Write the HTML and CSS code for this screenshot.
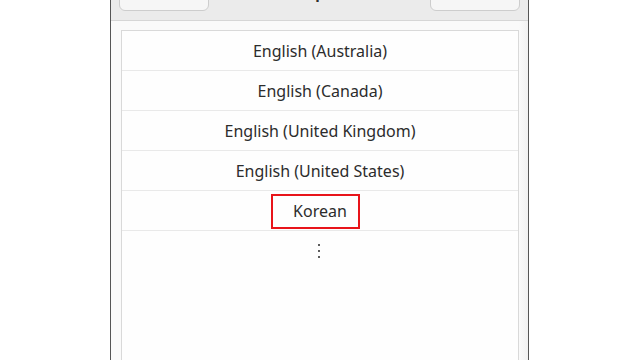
FILE: index.html
```html
<!DOCTYPE html>
<html lang="en">
<head>
    <meta charset="UTF-8">
    <meta name="viewport" content="width=device-width, initial-scale=1.0">
    <title>Add an Input Source</title>
    <link rel="stylesheet" href="styles.css">
</head>
<body>
    <div class="dialog">
        <div class="headerbar">
            <button class="hb-button">Cancel</button>
            <div class="hb-title">Add an Input Source</div>
            <button class="hb-button">Add</button>
        </div>

        <div class="dialog-body">
            <div class="lang-list">
                <div class="lang-row">English (Australia)</div>
                <div class="lang-row">English (Canada)</div>
                <div class="lang-row">English (United Kingdom)</div>
                <div class="lang-row">English (United States)</div>
                <div class="lang-row"><span class="marked">Korean</span></div>
                <div class="lang-row more">
                    <svg width="4" height="14" viewBox="0 0 4 14">
                        <rect x="1" y="0" width="2" height="2" fill="#5c5c5c"/>
                        <rect x="1" y="6" width="2" height="2" fill="#5c5c5c"/>
                        <rect x="1" y="12" width="2" height="2" fill="#5c5c5c"/>
                    </svg>
                </div>
            </div>
        </div>
    </div>
</body>
</html>
```

FILE: styles.css
```css
html, body {
    margin: 0;
    padding: 0;
    height: 100%;
    overflow: hidden;
}

body {
    background-color: #ffffff;
    font-family: "Noto Sans", "Open Sans", sans-serif;
    font-size: 16px;
    color: #2c2c2c;
}

.dialog {
    width: 417px;
    margin: -30px 0 0 110px;
    height: 420px;
    border-left: 1px solid #555555;
    border-right: 1px solid #555555;
    background-color: #fafafa;
    display: flex;
    flex-direction: column;
}

.headerbar {
    height: 51px;
    display: flex;
    align-items: flex-end;
    justify-content: space-between;
    padding: 0 8px 9px 8px;
    box-sizing: border-box;
    background-color: #ebebeb;
    border-bottom: 1px solid #d6d6d6;
}

.hb-button {
    width: 90px;
    height: 34px;
    border: 1px solid #cdcdcd;
    border-radius: 6px;
    background-color: #f6f6f6;
    font-family: inherit;
    font-size: 15px;
    color: #9a9a9a;
    padding: 0;
}

.hb-title {
    align-self: flex-start;
    margin-top: 13px;
    font-weight: bold;
    font-size: 15px;
    line-height: 20px;
    color: #2e2e2e;
}

.dialog-body {
    flex: 1;
    padding: 9px 9px 0 10px;
    background: linear-gradient(to left, #f1f1f1 0, #fafafa 9px);
}

.lang-list {
    height: 100%;
    border: 1px solid #d9d9d9;
    background-color: #fefefe;
}

.lang-row {
    height: 39px;
    border-bottom: 1px solid #e9e9e9;
    display: flex;
    align-items: center;
    justify-content: center;
}

.lang-row.more {
    border-bottom: none;
    padding-right: 2px;
}

.marked {
    position: relative;
}

/* red annotation box */
.marked::after {
    content: "";
    position: absolute;
    left: -22px;
    right: -13px;
    top: -6px;
    bottom: -7px;
    border: 2px solid #e8141a;
}
```
